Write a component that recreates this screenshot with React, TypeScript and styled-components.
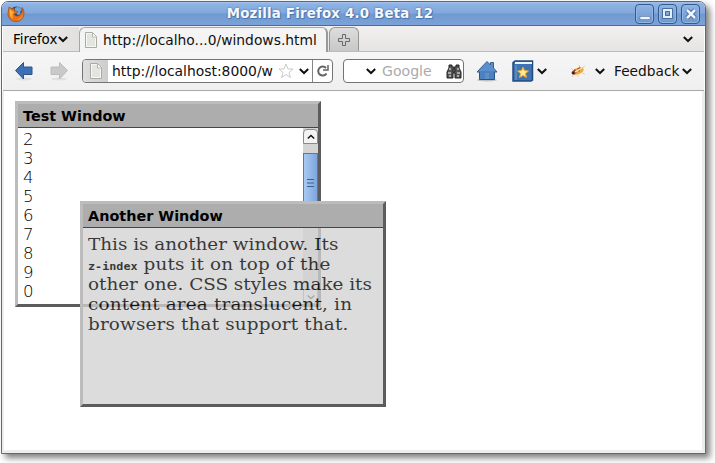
import React from "react";
import styled, { createGlobalStyle } from "styled-components";

const GlobalStyle = createGlobalStyle`
  * { box-sizing: border-box; }
  body {
    margin: 0;
    background: #fff;
    overflow: hidden;
    font-family: "DejaVu Sans", sans-serif;
    color: #111;
  }
  svg { display: block; flex: none; }
`;

const Desktop = styled.div`
  width: 715px;
  height: 463px;
  padding: 1px 0 0 1px;
  background: #fff;
  overflow: hidden;
`;

const Browser = styled.div`
  display: flex;
  flex-direction: column;
  width: 705px;
  height: 453px;
  border: 1px solid #656769;
  border-radius: 7px 7px 0 0;
  background: #fff;
  box-shadow: 4px 4px 6px rgba(0, 0, 0, 0.5);
`;

const TitleBar = styled.header`
  display: flex;
  align-items: center;
  height: 24px;
  flex: none;
  padding: 0 5px;
  background: linear-gradient(#a3c3ec 0, #8db2e3 10%, #82a9dc 48%, #7099d0 52%, #7ba3d9 100%);
  border-bottom: 1px solid #4a6b98;
  border-radius: 6px 6px 0 0;
`;

const Title = styled.h1`
  flex: 1;
  margin: 0;
  text-align: center;
  font: bold 13.33px/24px "DejaVu Sans", sans-serif;
  letter-spacing: 0.21px;
  color: #f4f8fd;
  text-shadow: 0 0 2px #42669a, 1px 1px 0 #567bb0;
`;

const FrameButtons = styled.div`
  display: flex;
  gap: 4px;
`;

const FrameButton = styled.button`
  display: grid;
  place-items: center;
  width: 19px;
  height: 20px;
  padding: 0;
  border: 1px solid #35598a;
  border-radius: 4px;
  background: linear-gradient(#8eb3e4, #7097cc);
  box-shadow: inset 0 0 0 1px #94b6e4;
`;

const Chrome = styled.div`
  display: flex;
  flex-direction: column;
  flex: none;
  margin: 0 1px;
`;

const TabBar = styled.nav`
  display: flex;
  align-items: stretch;
  height: 26px;
  padding: 1px 11px 0 1px;
  border-bottom: 1px solid #bdbdb8;
  background: linear-gradient(#f2f0f0, #e6e3e3);
`;

const TabListButton = styled.span`
  align-self: center;
`;

const MenuButton = styled.button`
  display: flex;
  align-items: center;
  gap: 1px;
  width: 75px;
  padding: 0 0 0 9px;
  border: 0;
  background: linear-gradient(90deg, #eeedec, #e2e1e0);
  font: 13.4px "DejaVu Sans", sans-serif;
`;

const Tab = styled.div`
  display: flex;
  align-items: center;
  gap: 5px;
  width: 249px;
  height: 26px;
  padding: 0 0 1px 4px;
  border: 1px solid #a6a6a6;
  border-right: 2px solid #999;
  border-bottom: 0;
  border-radius: 6px 6px 0 0;
  background: #f5f4f4;
  font-size: 13.83px;
  white-space: nowrap;
`;

const NewTab = styled.button`
  display: grid;
  place-items: center;
  width: 30px;
  margin-left: 1px;
  padding: 0;
  border: 1px solid #969696;
  border-bottom: 0;
  border-radius: 6px 6px 0 0;
  background: linear-gradient(#dedddd, #c9c8c8);
`;

const Spacer = styled.span`
  flex: 1;
`;

const ToolBar = styled.div`
  display: flex;
  align-items: center;
  height: 39px;
  padding: 0 4px 0 11px;
  border-bottom: 1px solid #aaa9a5;
  background: linear-gradient(#f7f6f6, #f0efef);
`;

const HistoryButtons = styled.div`
  display: flex;
  gap: 15px;
  width: 68px;
`;

const Field = styled.div<{ $width: number }>`
  display: flex;
  align-items: center;
  flex: none;
  width: ${(p) => p.$width}px;
  height: 24px;
  margin-right: 10px;
  border: 1px solid #747474;
  border-radius: 4px;
  background: #fff;
  overflow: hidden;
`;

const Identity = styled.span`
  display: grid;
  place-items: center;
  width: 25px;
  height: 22px;
  margin-right: 4px;
  background: linear-gradient(90deg, #dedede, #cdcdcd);
`;

const Address = styled.span`
  width: 166px;
  font-size: 13.9px;
  line-height: 20px;
  white-space: nowrap;
`;

const Reload = styled.span`
  display: grid;
  place-items: center;
  width: 20px;
  height: 22px;
  margin-left: 3px;
  border-left: 1px solid #858585;
`;

const Placeholder = styled.span`
  width: 69px;
  padding-left: 6px;
  font-size: 14.1px;
  color: #aaa;
`;

const Tools = styled.div`
  display: flex;
  align-items: center;
  flex: 1;
  padding-left: 2px;
`;

const BookmarkGroup = styled.div`
  display: flex;
  align-items: center;
  gap: 3px;
  margin-left: 14px;
`;

const BugGroup = styled.div`
  display: flex;
  align-items: center;
  gap: 8px;
  margin-left: 22px;
`;

const Feedback = styled.span`
  margin: 0 3px 0 9px;
  font-size: 13.75px;
`;

const Page = styled.main`
  position: relative;
  flex: 1;
  border: solid #ededed;
  border-width: 0 3px 3px 2px;
  background: #fff;
`;

const FloatingWindow = styled.section<{ $x: number; $y: number; $z: number }>`
  position: absolute;
  left: ${(p) => p.$x}px;
  top: ${(p) => p.$y}px;
  z-index: ${(p) => p.$z};
  display: flex;
  flex-direction: column;
  width: 306px;
  height: 206px;
  border: 3px solid;
  border-color: #bcbcbc #5c5c5c #5c5c5c #bcbcbc;
`;

const WindowTitle = styled.h2`
  height: 24px;
  flex: none;
  margin: 0;
  padding-left: 5px;
  border-bottom: 1px solid #454545;
  background: #adadad;
  font: bold 14.4px/25px "DejaVu Sans", sans-serif;
  color: #000;
`;

const ListContent = styled.div`
  display: flex;
  justify-content: space-between;
  flex: 1;
  min-height: 0;
  padding-left: 5px;
  background: #fff;
`;

const Numbers = styled.div`
  padding-top: 2px;
  font: 200 16.6px/19px "DejaVu Sans Light", "DejaVu Sans", sans-serif;
  color: #000;
`;

const Scroll = styled.div`
  display: flex;
  flex-direction: column;
  width: 15px;
  padding-top: 1px;
  background: #d4d4d4;
`;

const ScrollButton = styled.span<{ $end?: boolean }>`
  display: grid;
  place-items: center;
  height: 15px;
  flex: none;
  margin-top: ${(p) => (p.$end ? "auto" : "0")};
  border: 1px solid #8a8a8a;
  border-radius: ${(p) => (p.$end ? "0 0 4px 4px" : "4px 4px 0 0")};
  background: #f3f3f3;
`;

const Thumb = styled.span`
  display: grid;
  place-items: center;
  height: 60px;
  margin-top: 9px;
  border: 1px solid #5679aa;
  background: linear-gradient(90deg, #a9c9f2, #7ca6df);
`;

const TextContent = styled.div`
  flex: 1;
  padding: 6px 0 0 5px;
  background: #d3d3d3;
  opacity: 0.78;
  font: 17px/20px "DejaVu Serif", serif;
  white-space: nowrap;
  color: #000;
`;

const Line = styled.div<{ $tracking: number }>`
  width: 260px;
  height: 20px;
  letter-spacing: ${(p) => p.$tracking}px;
  transform: scaleX(1.08);
  transform-origin: left;
`;

const Code = styled.code`
  font: bold 10.9px/10px "DejaVu Sans Mono", monospace;
  letter-spacing: 0;
`;

const Chevron = ({ size = 10, up = false, color = "#111", weight = 2 }) => (
  <svg width={size} height={size} viewBox="0 0 10 10" fill="none" stroke={color} strokeWidth={weight}>
    <path d={up ? "M1 7 5 3l4 4" : "M.8 3 5 7l4.2-4"} />
  </svg>
);

const FirefoxLogo = () => (
  <svg width="18" height="18" viewBox="0 0 18 18">
    <circle cx="9.5" cy="8.5" r="7" fill="#244b83" />
    <path d="M8 3c2-2 6-1 7 2l-2 2 1 2-3 1-3-3z" fill="#6aa5d7" />
    <path d="M2 2 1 8c-.4 5 3 8.500 8 8.500s8-4 8-8.500c0-2-.7-4-2-5.500.8 4-.8 8-4.500 8.500-2 .2-3-.8-3.500-2l3-1 .5-1.500-3-.5L7 3 5 4z" fill="#e8731d" stroke="#a84512" strokeWidth=".7" />
    <path d="M3 4c-1 4 0 8 3 10-1-3-1-5 1-7L5 6zM16 7c0 5-3 7-6 8 4 0 6-3 6-8z" fill="#f8b331" />
  </svg>
);

const PageIcon = () => (
  <svg width="14" height="16" viewBox="0 0 14 16">
    <path d="M1.500.5h7l4 4v11h-11z" fill="#f6f7f4" stroke="#a9aba5" />
    <path d="M3 2h5v3.500h3V14H3z" fill="#e2e6df" />
    <path d="M8.500 1v4h4" fill="#fff" stroke="#b2b4af" />
  </svg>
);

const Arrow = ({ forward = false }) => (
  <svg width="20" height="20" viewBox="0 0 20 20">
    <ellipse cx="10" cy="18" rx="8" ry="1.500" fill="#000" opacity=".07" />
    <path
      d="M1.500 9.500 9.500 1.500V6h8.500v7.500H9.500V18z"
      transform={forward ? "matrix(-1 0 0 1 20 0)" : undefined}
      fill={forward ? "#c9c9c9" : "#3c70b3"}
      stroke={forward ? "#bcbcbc" : "#28568d"}
    />
  </svg>
);

const Star = () => (
  <svg width="16" height="16" viewBox="0 0 16 16">
    <path d="m8 1 2 5h5l-4 3.500 1.500 5L8 11.500l-4.500 3 1.500-5L1 6h5z" fill="#fff" stroke="#c9c9c9" />
  </svg>
);

const ReloadIcon = () => (
  <svg width="14" height="14" viewBox="0 0 14 14" fill="none" stroke="#636363" strokeWidth="2">
    <path d="M10.500 9.500A4.500 4.500 0 1 1 10 4" />
    <path d="M7 6h5V1" strokeWidth="1.500" />
  </svg>
);

const Binoculars = () => (
  <svg width="18" height="17" viewBox="0 0 18 17">
    <path d="M4 2h3v2h4V2h3v3l2 4v6h-6v-5H8v5H2V9l2-4z" fill="#555" stroke="#222" />
    <path d="M4 6h2M12 6h2M3 10h3M12 10h3M4 13h2M12 13h2" stroke="#c3c3c3" strokeWidth="1.500" />
    <path d="M8 6h2v3H8z" fill="#888" stroke="#222" />
  </svg>
);

const Home = () => (
  <svg width="22" height="22" viewBox="0 0 22 22">
    <ellipse cx="11" cy="20" rx="10" ry="1.500" opacity=".2" />
    <path d="M3.500 11v8.500h15V11" fill="#4c80be" stroke="#285587" />
    <path d="M1 12 11 1.500l3.500 3.500V2.500h3V8l3.500 4z" fill="#5c90cd" stroke="#315f96" />
    <path d="M4 11h14v2H4z" fill="#4c80be" />
    <path d="M9 13h4v6H9z" fill="#77a5da" opacity=".4" />
  </svg>
);

const Book = () => (
  <svg width="22" height="22" viewBox="0 0 22 22">
    <path d="M1 2.500 3 1h17.500v19L19 21H1z" fill="#3f73b3" stroke="#244b80" strokeWidth="1.500" />
    <path d="M3 2h17v2H3z" fill="#eef5fc" />
    <path d="M4 5v15" stroke="#789fcb" />
    <path d="m11 7 1.500 3.500 4 .5-3 2.500 1 4-3.500-2-3.500 2 1-4-3-2.500 4-.5z" fill="#ffe991" stroke="#e5a52b" />
  </svg>
);

const Bug = () => (
  <svg width="18" height="16" viewBox="0 0 18 16">
    <path d="M2 5 5 8m0 3-2 3m6-3v3m2-9-1-3m3 3 3-2m-3 7 3 1" stroke="#e0cfb4" fill="none" />
    <ellipse cx="9" cy="8" rx="6" ry="3.200" transform="rotate(-20 9 8)" fill="#f0a840" />
    <path d="M3 9 6 6l2 3-3 3zM8 6l3-2 1 2-2 3z" fill="#98402a" />
    <path d="m6 9 7-4" stroke="#f7dc9b" strokeWidth="1.500" />
    <circle cx="4" cy="10" r="1.400" fill="#432119" />
  </svg>
);

export default function App() {
  return (
    <>
      <GlobalStyle />
      <Desktop>
        <Browser>
          <TitleBar>
            <FirefoxLogo />
            <Title>Mozilla Firefox 4.0 Beta 12</Title>
            <FrameButtons>
              <FrameButton aria-label="Minimize">
                <svg width="12" height="12"><path d="M1 8.500h10v3H1z" fill="#eef5ff" stroke="#446996" strokeWidth=".5" /></svg>
              </FrameButton>
              <FrameButton aria-label="Maximize">
                <svg width="11" height="11" fill="none"><path d="M2 2h7v7H2z" stroke="#e5effc" strokeWidth="2" /><path d="M.5.5h10v10H.5zM3.500 3.500h4v4h-4z" stroke="#46709f" /></svg>
              </FrameButton>
              <FrameButton aria-label="Close">
                <svg width="12" height="12"><path d="m2 2 8 8m0-8-8 8" stroke="#3f6798" strokeWidth="4.500" /><path d="m2 2 8 8m0-8-8 8" stroke="#f1f6fe" strokeWidth="2.500" /></svg>
              </FrameButton>
            </FrameButtons>
          </TitleBar>
          <Chrome>
            <TabBar>
              <MenuButton>Firefox<Chevron /></MenuButton>
              <Tab><PageIcon />http://localho...0/windows.html</Tab>
              <NewTab aria-label="New tab">
                <svg width="14" height="14" fill="none"><path d="M5.500 1.500h3v4h4v3h-4v4h-3v-4h-4v-3h4z" stroke="#686868" /></svg>
              </NewTab>
              <Spacer />
              <TabListButton><Chevron /></TabListButton>
            </TabBar>
            <ToolBar>
              <HistoryButtons><Arrow /><Arrow forward /></HistoryButtons>
              <Field $width={251}>
                <Identity><PageIcon /></Identity>
                <Address>http://localhost:8000/w</Address>
                <Star />
                <Spacer />
                <Chevron />
                <Reload><ReloadIcon /></Reload>
              </Field>
              <Field $width={121}>
                <Spacer />
                <Chevron />
                <Placeholder>Google</Placeholder>
                <Binoculars />
              </Field>
              <Tools>
                <Home />
                <BookmarkGroup><Book /><Chevron /></BookmarkGroup>
                <BugGroup><Bug /><Chevron /></BugGroup>
                <Feedback>Feedback</Feedback>
                <Chevron />
              </Tools>
            </ToolBar>
          </Chrome>
          <Page>
            <FloatingWindow $x={11} $y={10} $z={1}>
              <WindowTitle>Test Window</WindowTitle>
              <ListContent>
                <Numbers>
                  {[2, 3, 4, 5, 6, 7, 8, 9, 0].map((n) => <div key={n}>{n}</div>)}
                </Numbers>
                <Scroll>
                  <ScrollButton><Chevron up size={8} weight={1.7} /></ScrollButton>
                  <Thumb>
                    <svg width="7" height="8"><path d="M0 .5h7M0 4h7M0 7.500h7" stroke="#3c6090" /></svg>
                  </Thumb>
                  <ScrollButton $end><Chevron size={8} weight={1.7} /></ScrollButton>
                </Scroll>
              </ListContent>
            </FloatingWindow>
            <FloatingWindow $x={76} $y={110} $z={2}>
              <WindowTitle>Another Window</WindowTitle>
              <TextContent>
                <Line $tracking={0}>This is another window. Its</Line>
                <Line $tracking={0.14}><Code>z-index</Code> puts it on top of the</Line>
                <Line $tracking={0}>other one. CSS styles make its</Line>
                <Line $tracking={0.15}>content area translucent, in</Line>
                <Line $tracking={0.15}>browsers that support that.</Line>
              </TextContent>
            </FloatingWindow>
          </Page>
        </Browser>
      </Desktop>
    </>
  );
}
